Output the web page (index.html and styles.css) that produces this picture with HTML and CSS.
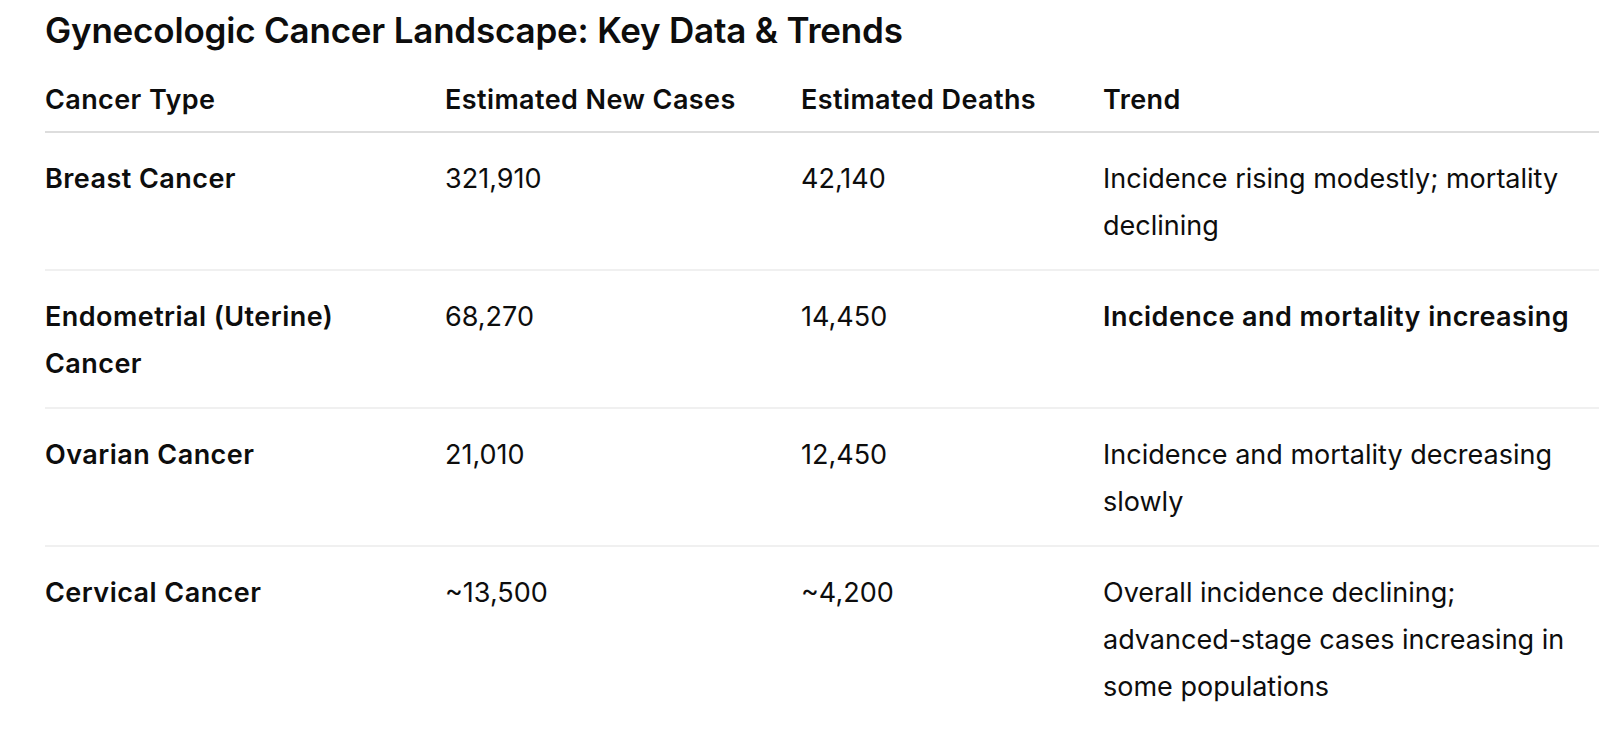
FILE: index.html
```html
<!DOCTYPE html>
<html lang="en">
<head>
<meta charset="utf-8">
<title>Gynecologic Cancer Landscape</title>
<link rel="stylesheet" href="styles.css">
</head>
<body>
<main class="page">
  <h2 class="title">Gynecologic Cancer Landscape: Key Data &amp; Trends</h2>
  <table class="data">
    <colgroup>
      <col class="c1"><col class="c2"><col class="c3"><col class="c4">
    </colgroup>
    <thead>
      <tr>
        <th>Cancer Type</th>
        <th>Estimated New Cases</th>
        <th>Estimated Deaths</th>
        <th>Trend</th>
      </tr>
    </thead>
    <tbody>
      <tr>
        <td class="name">Breast Cancer</td>
        <td>321,910</td>
        <td>42,140</td>
        <td>Incidence rising modestly; mortality declining</td>
      </tr>
      <tr>
        <td class="name">Endometrial (Uterine) Cancer</td>
        <td>68,270</td>
        <td>14,450</td>
        <td><strong>Incidence and mortality increasing</strong></td>
      </tr>
      <tr>
        <td class="name">Ovarian Cancer</td>
        <td>21,010</td>
        <td>12,450</td>
        <td>Incidence and mortality decreasing slowly</td>
      </tr>
      <tr>
        <td class="name">Cervical Cancer</td>
        <td>~13,500</td>
        <td>~4,200</td>
        <td>Overall incidence declining; advanced-stage cases increasing in some populations</td>
      </tr>
    </tbody>
  </table>
</main>
</body>
</html>
```

FILE: styles.css
```css
html, body {
  margin: 0;
  padding: 0;
  background: #ffffff;
}

body {
  font-family: Inter, "Noto Sans", "Liberation Sans", sans-serif;
  color: #0d0d0d;
}

.page {
  padding: 10px 0 0 45px;
}

.title {
  margin: 0;
  font-size: 35px;
  line-height: 41px;
  font-weight: 600;
  letter-spacing: -0.2px;
}

.data {
  margin-top: 25px;
  width: 1554px;
  border-collapse: collapse;
  table-layout: fixed;
  font-size: 27px;
  line-height: 47px;
}

.c1 { width: 400px; }
.c2 { width: 356px; }
.c3 { width: 302px; }
.c4 { width: 496px; }

.data th {
  text-align: left;
  font-weight: 600;
  letter-spacing: 0.4px;
  padding: 0 24px 8px 0;
  border-bottom: 2px solid #dddddd;
}

.data td {
  vertical-align: top;
  padding: 22px 24px 20px 0;
  border-bottom: 2px solid #f0f0f0;
  font-weight: 400;
}

.data th:last-child,
.data td:last-child {
  padding-right: 0;
}

.data tbody tr:last-child td {
  border-bottom: none;
}

.data td.name,
.data strong {
  font-weight: 600;
  letter-spacing: 0.45px;
}
```
